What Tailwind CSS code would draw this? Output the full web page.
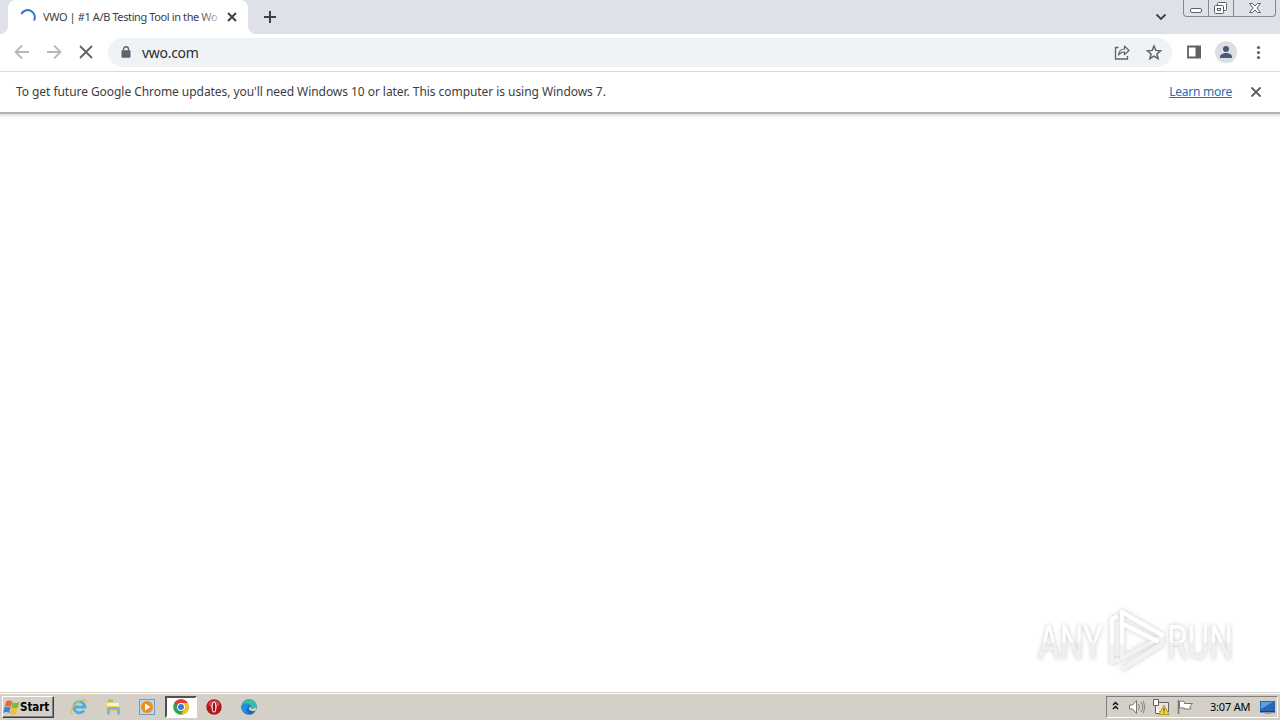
<!DOCTYPE html>
<html lang="en">
<head>
  <meta charset="UTF-8" />
  <title>VWO | #1 A/B Testing Tool in the World</title>
  <meta name="viewport" content="width=device-width, initial-scale=1.0" />
  <script src="https://cdn.jsdelivr.net/npm/@tailwindcss/browser@4"></script>
</head>
<body class="w-[1280px] h-[720px] overflow-hidden flex flex-col bg-white text-[#3c3d40] font-['Noto_Sans',sans-serif]">

  <!-- Tab strip -->
  <header class="h-[34px] shrink-0 bg-[#dee1e8] flex">
    <div class="w-2 bg-white"><div class="h-full bg-[#dee1e8] rounded-br-lg"></div></div>
    <div class="w-60 bg-white rounded-t-lg flex items-start pl-3">
      <svg class="mt-[9px] w-4 h-4" viewBox="0 0 16 16" fill="none" stroke="#3474c4" stroke-width="2">
        <path d="M1.300 5A7 7 0 0 1 14 11.500" />
      </svg>
      <div class="relative ml-[7px] mt-[9px] w-[184px] h-4 leading-4 text-[11px] tracking-[-0.39px] whitespace-nowrap">VWO | #1 A/B Testing Tool in the Wo
        <div class="absolute left-[158px] top-0 w-5 h-4 bg-linear-to-r from-white/10 to-white/80"></div>
      </div>
      <svg class="mt-3 w-[10px] h-[10px]" viewBox="0 0 10 10" stroke="#3c4043" stroke-width="1.900">
        <path d="M1 1l8 8M9 1L1 9" />
      </svg>
    </div>
    <div class="w-2 bg-white"><div class="h-full bg-[#dee1e8] rounded-bl-lg"></div></div>
    <svg class="ml-[7px] mt-[10px] w-[14px] h-[14px]" viewBox="0 0 14 14" stroke="#3c4043" stroke-width="2">
      <path d="M7 1v12M1 7h12" />
    </svg>
    <div class="ml-auto flex items-start">
      <svg class="mt-[13px] mr-4 w-3 h-[8px]" viewBox="0 0 12 8" fill="none" stroke="#3c4043" stroke-width="1.800">
        <path d="M1.500 1.500L6 6l4.500-4.500" />
      </svg>
      <div class="mr-1 w-[93px] h-[17px] border border-t-0 border-[#85888f] rounded-b flex bg-[#dfe2e9]">
        <svg class="w-[91px] h-4" viewBox="0 0 91 16" fill="none" stroke="#5c6066">
          <path d="M24.500 0v16M49.500 0v16" stroke="#85888f" />
          <rect x="6.500" y="8.500" width="11" height="4" rx="1.500" fill="#fff" />
          <rect x="33.500" y="2.500" width="9" height="8" rx="1" fill="#fff" />
          <rect x="30.500" y="5.500" width="9" height="8" rx="1" fill="#fff" />
          <rect x="33.500" y="8.500" width="3" height="2" />
          <path d="M65.500 3.500h3l2.500 2.500 2.500-2.500h3L73 8l3.500 4.500h-3L71 10l-2.500 2.500h-3L69 8z" fill="#fff" />
        </svg>
      </div>
    </div>
  </header>

  <!-- Toolbar -->
  <div class="h-[38px] shrink-0 border-b border-[#d8dadd] flex items-center">
    <svg class="w-[108px] h-9" viewBox="0 0 108 36" fill="none" stroke-width="1.800">
      <path d="M29 17H16M22 10.500L15.500 17l6.500 6.500M47 17h13M54 10.500l6.500 6.500-6.500 6.500" stroke="#b6b8ba" />
      <path d="M80 11l12 12M92 11L80 23" stroke="#5f6368" />
    </svg>
    <div class="w-[1064px] h-[29px] rounded-full bg-[#f0f3f5] flex items-center">
      <svg class="ml-3 w-3 h-4" viewBox="0 0 12 16">
        <path d="M3.500 7V4.200a2.500 2.500 0 0 1 5 0V7" fill="none" stroke="#5f6368" stroke-width="1.400" />
        <rect x="1.500" y="5.300" width="9" height="7.500" rx="1" fill="#5f6368" />
      </svg>
      <span class="ml-[10px] text-[14px] leading-4 tracking-[-0.3px] text-[#2b2d30]">vwo.com</span>
      <svg class="ml-auto w-[60px] h-7" viewBox="0 0 60 28" fill="none" stroke="#5f6368">
        <path d="M6.500 8.500H3.500v11.500h12V17" stroke-width="1.300" />
        <path d="M6.500 16c.5-4 2.500-6 6-6V7l4.500 4.500-4.500 4V13c-3 0-4.500 1-6 3z" stroke-width="1.200" stroke-linejoin="round" />
        <path d="M42 7l1.800 4.400 4.800.4-3.700 3.100 1.200 4.700-4.100-2.500-4.100 2.500 1.200-4.700-3.700-3.100 4.800-.4z" stroke-width="1.500" />
      </svg>
    </div>
    <svg class="w-[108px] h-9" viewBox="0 0 108 36">
      <path d="M16 11.500h12v11H16z" fill="none" stroke="#5f6368" stroke-width="1.800" />
      <path d="M23.500 11H29v12h-5.500z" fill="#5f6368" />
      <circle cx="54" cy="17.300" r="11" fill="#dbdee3" />
      <circle cx="54" cy="14" r="3" fill="#4b5876" />
      <path d="M48 23v-1.500c0-2 3.500-3.500 6-3.500s6 1.500 6 3.500V23z" fill="#4b5876" />
      <g fill="#5f6368"><circle cx="86.500" cy="12.500" r="1.600" /><circle cx="86.500" cy="17.500" r="1.600" /><circle cx="86.500" cy="22.500" r="1.600" /></g>
    </svg>
  </div>

  <!-- Update notice -->
  <div class="h-[41px] shrink-0 border-b border-[#b4b4b4] flex items-center pl-4 pr-[19px] text-[12px]">
    <span class="tracking-[-0.055px] whitespace-nowrap">To get future Google Chrome updates, you'll need Windows 10 or later. This computer is using Windows 7.</span>
    <a href="#" class="ml-auto tracking-[-0.24px] text-[#2a6ab8] underline whitespace-nowrap">Learn more</a>
    <svg class="ml-[19px] w-[10px] h-[10px]" viewBox="0 0 10 10" stroke="#5f6368" stroke-width="2">
      <path d="M.5.5l9 9M9.500.5l-9 9" />
    </svg>
  </div>

  <!-- Page, still loading -->
  <main class="grow bg-white flex flex-col justify-between items-end">
    <div class="w-full h-[5px] border-t border-[#b4b4b4] bg-linear-to-b from-[#dedede] to-white"></div>
    <svg class="mr-[30px] mb-3 w-[230px] h-20 overflow-visible drop-shadow-[0_0_2px_rgba(0,0,0,0.22)]" viewBox="0 0 230 80" fill="none">
      <defs>
        <linearGradient id="mark" x1="0" y1="0" x2="0" y2="1">
          <stop offset=".5" stop-color="#fff" />
          <stop offset=".5" stop-color="#f0f0f0" />
        </linearGradient>
      </defs>
      <g fill="url(#mark)" font-family="Roboto, sans-serif" font-size="49">
        <text x="18" y="59" textLength="65" lengthAdjust="spacingAndGlyphs">ANY</text>
        <text x="147" y="59" textLength="66" lengthAdjust="spacingAndGlyphs">RUN</text>
      </g>
      <g stroke-width="4.500" stroke-linejoin="round" stroke-linecap="round">
        <path d="M98 60l-6 2V42M102 42v16l38-20M104 68l38-24v-6" stroke="#f2f2f2" />
        <path d="M92 42V19l4-2M102 42V12l40 23M103 24l34 17" stroke="#fff" />
      </g>
    </svg>
  </main>

  <!-- Taskbar -->
  <footer class="h-7 shrink-0 bg-[#d4d0c8] border-t border-[#d4d0c8] flex">
    <div class="w-full border-t border-white flex items-center">
      <button class="ml-0.5 w-[52px] h-[22px] bg-[#d4d0c8] border border-t-white border-l-white border-r-[#404040] border-b-[#404040] shadow-[inset_-1px_-1px_0_#808080] flex items-center text-black">
        <svg class="w-[17px] h-[17px] shrink-0" viewBox="0 0 17 17">
          <path d="M3.200 2.500c2-1.500 4-1.500 6 0L7.700 8c-2-1.300-4-1.300-6 0z" fill="#e9652e" />
          <path d="M9.700 3c2 1.300 4 1.300 6.800 0L15 8.500c-2 1.300-4.500 1.300-6.800 0z" fill="#83b83c" />
          <path d="M1.500 8.600c2-1.300 4-1.300 6 0l-1.400 5.400c-2-1.300-4-1.300-6 0z" fill="#3d84cf" />
          <path d="M8 9.100c2 1.300 4.500 1.300 6.800 0l-1.400 5.400c-2 1.300-4.500 1.300-6.800 0z" fill="#f5bd2f" />
        </svg>
        <span class="text-[11.500px] leading-4 font-bold font-['DejaVu_Sans_Condensed','DejaVu_Sans',sans-serif] tracking-[-0.05px]">Start</span>
      </button>

      <div class="ml-4 flex items-center">
        <!-- Internet Explorer -->
        <svg class="w-[18px] h-[18px]" viewBox="0 0 18 18" fill="none">
          <path d="M14 12.500A5.600 5.600 0 1 1 15 9H5" stroke="#46aee0" stroke-width="2.800" />
          <path d="M3 15.500C-1 17 1 10 6 5.500S18 .5 16.500 4" stroke="#e8bd3c" stroke-width="1.300" />
        </svg>
        <!-- Explorer -->
        <svg class="ml-4 w-[18px] h-[18px]" viewBox="0 0 18 18">
          <path d="M1.500 3h7l1 2H16v9H1.500z" fill="#ebcf77" />
          <path d="M4 1.500h5V4H4z" fill="#94c67b" />
          <path d="M3 5h12v3H3z" fill="#fff3bd" />
          <path d="M3 16.500V11q0-2 2-2h9q2 0 2 2v5.500h-3V12H6v4.500z" fill="#75b7df" />
        </svg>
        <!-- Media Player -->
        <svg class="ml-4 w-[18px] h-[18px]" viewBox="0 0 18 18">
          <rect x="1.500" y="1.500" width="15" height="15" fill="#b9d8f0" stroke="#6b9dc8" />
          <circle cx="9" cy="9" r="6" fill="#f18b1c" />
          <path d="M7 5.500v7L12.500 9z" fill="#fff" />
        </svg>
        <!-- Chrome, active window -->
        <div class="ml-[9px] w-8 h-[22px] bg-white border-2 border-t-[#505050] border-l-[#505050] border-r-white border-b-white flex items-center justify-center">
          <svg class="w-4 h-4 shrink-0" viewBox="0 0 16 16">
            <circle cx="8" cy="8" r="7.800" fill="#2fa34f" />
            <path d="M8 8L1.250 4.100a7.800 7.800 0 0 1 13.500 0z" fill="#e33b2e" />
            <path d="M8 4.100h6.750A7.800 7.800 0 0 1 8 15.800l3.400-5.800z" fill="#fbc116" />
            <circle cx="8" cy="8" r="3.900" fill="#fff" />
            <circle cx="8" cy="8" r="3" fill="#367be2" />
          </svg>
        </div>
        <!-- Opera -->
        <svg class="ml-[9px] w-4 h-4" viewBox="0 0 16 16">
          <circle cx="8" cy="8" r="7.700" fill="#b3161b" />
          <ellipse cx="8" cy="5" rx="5.500" ry="3.500" fill="#cf4a4b" />
          <ellipse cx="8" cy="8" rx="2.500" ry="5.500" fill="#fff" />
          <ellipse cx="8" cy="8" rx="1.300" ry="4.500" fill="#8d1014" />
        </svg>
        <!-- Edge -->
        <svg class="ml-[19px] w-4 h-4" viewBox="0 0 16 16">
          <circle cx="8" cy="8" r="7.700" fill="#1769bd" />
          <path d="M.3 8A7.700 7.700 0 0 1 15.700 8c0 2.500-3 3.500-5.500 2.500C11.500 7 8 4.500 4.500 5.500 2.500 6 1 7 .3 8z" fill="#35bfa8" />
          <path d="M.3 8C1 4 6 3 9 5.500L6 9c-1.500 2 0 4 2 5.500C4 15.500.3 12 .3 8z" fill="#208fd6" />
          <path d="M9.500 7.500c-2.500 1-2 4 1 4.500 2 .4 3.500-.2 4.500-.8 1-3-1-3.200-3.500-.9-1.300-.3-1.200-1.300-2-2.800z" fill="#d4d0c8" />
        </svg>
      </div>

      <!-- Notification area -->
      <div class="ml-auto mr-0.5 w-[172px] h-[22px] border border-t-[#808080] border-l-[#808080] border-r-white border-b-white flex items-center text-black">
        <svg class="w-[92px] h-5 shrink-0" viewBox="0 0 92 20" fill="none">
          <path d="M6 8l2.500-2.500L11 8M6 12l2.500-2.500L11 12" stroke="#111" stroke-width="1.500" />
          <path d="M22.500 8h3l4-4.500v13l-4-4.500h-3z" fill="#fff" stroke="#77756f" />
          <path d="M31.500 7q2 3 0 6M34 5q3.500 5 0 10M36.300 4q3 6 0 12" stroke="#85837d" />
          <path d="M48.500 5.500h13v9h-13z" fill="#e8e7e2" stroke="#65635f" />
          <path d="M46.500 2.500h5v6h-5zM48.500 8v8.500h5" fill="#fff" stroke="#65635f" />
          <path d="M57 8l5 9.500H52z" fill="#f8d834" stroke="#b9971d" />
          <path d="M57 11v3.500M57 15.500v1" stroke="#333" />
          <path d="M71.500 3v14" stroke="#77756f" stroke-width="1.500" />
          <path d="M72.500 4.500q3-1.500 5 .5v1.500h8l-2.500 3 1 2.500h-6.500V11h-5z" fill="#fff" stroke="#77756f" />
        </svg>
        <span class="ml-[11px] text-[11px] leading-4 tracking-[-0.2px] whitespace-nowrap">3:07 AM</span>
        <svg class="ml-auto mr-px w-4 h-4" viewBox="0 0 16 16">
          <path d="M0 2h15v10H0z" fill="#2866b5" />
          <path d="M1 3h12L1 10z" fill="#5aa0df" />
          <path d="M0 12h15v1.500H0z" fill="#1c3e70" />
          <path d="M5 13.500h6V15H5z" fill="#8ba1b9" />
        </svg>
      </div>
    </div>
  </footer>

</body>
</html>
